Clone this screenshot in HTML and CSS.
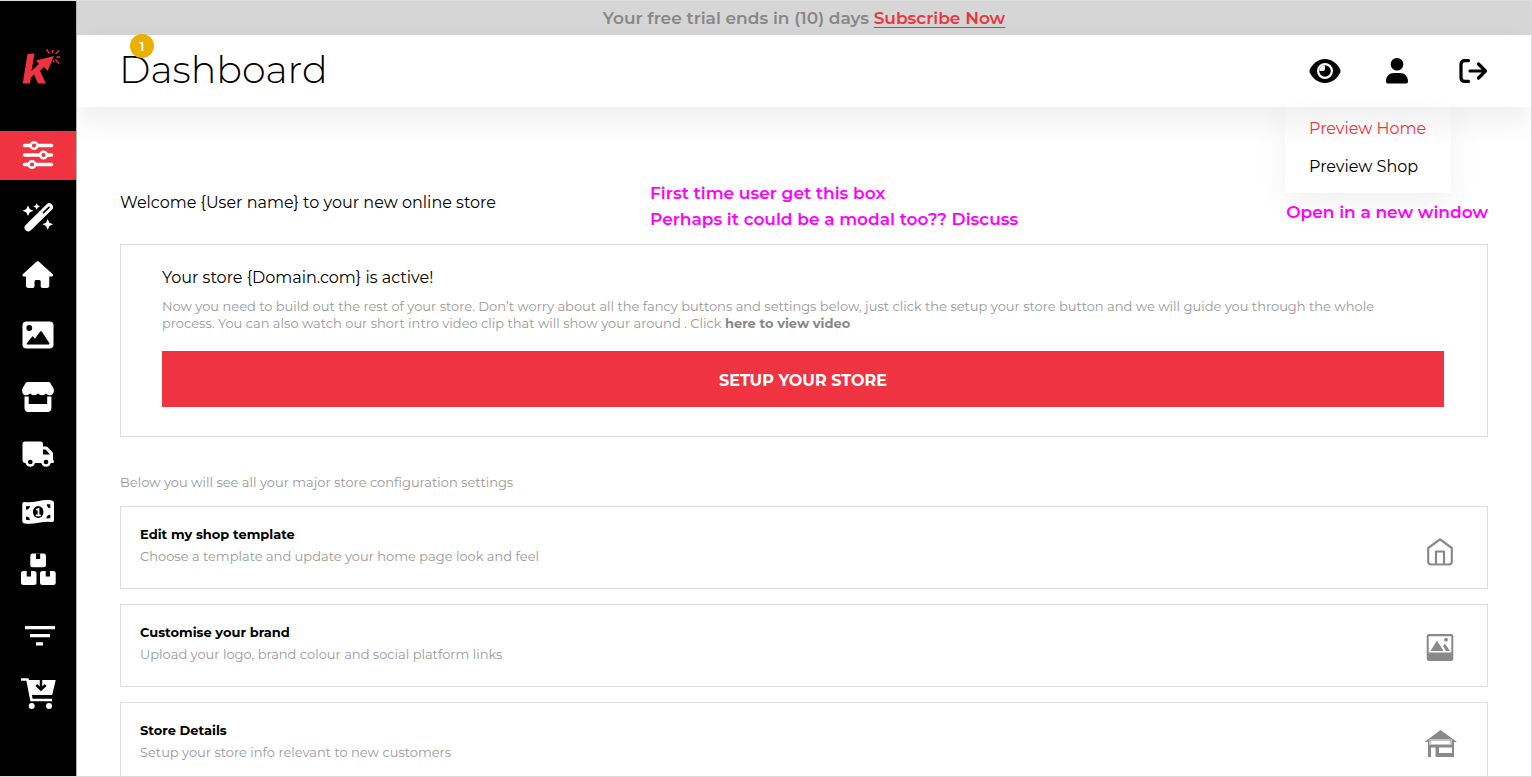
FILE: index.html
```html
<!DOCTYPE html>
<html lang="en">
<head>
<meta charset="utf-8">
<meta name="viewport" content="width=device-width, initial-scale=1">
<title>Dashboard</title>
<link rel="stylesheet" href="styles.css">
</head>
<body>
<div class="shell">
  <aside class="sidebar">
    <a class="logo" href="#" aria-label="Store home">
      <svg width="42" height="42" viewBox="0 0 42 42" fill="#ef3340">
        <path d="M7.500 9l7-.5-3 17.500 7.500-7-3-3.500 18-4.500-6.500 15-3.500-4-4 4 6 12.500h-8l-4-9-3 3-1.200 6H2.700z"/>
        <path d="M26.500 4.500l3 4M33 5l-.5 3M39.500 5.500l-4 3.500M36.500 12h3.500M35.500 14.500l3.500 4M33.500 15l.5 2.500" stroke="#ef3340" stroke-width="1.300"/>
      </svg>
    </a>
    <nav class="nav" aria-label="Main">
      <a class="nav-item nav-item-active" href="#" aria-label="Settings">
        <svg class="nav-icon" viewBox="0 0 36 36"><path d="M4.500 8.500h27M4.500 18h27M4.500 27.500h27" stroke="#fff" stroke-width="3.600" stroke-linecap="round"/><g fill="#ef3340" stroke="#fff" stroke-width="2.500"><circle cx="14" cy="8.500" r="3.300"/><circle cx="23.500" cy="18" r="3.300"/><circle cx="12" cy="27.500" r="3.300"/></g></svg>
      </a>
      <a class="nav-item" href="#" aria-label="Design">
        <svg class="nav-icon" viewBox="0 0 36 36"><path d="M8.300 28.700L29.300 8" stroke="#fff" stroke-width="7.400" stroke-linecap="round"/><path d="M23.500 13.700L29 8.300" stroke="#000" stroke-width="1.700" stroke-linecap="round"/><path fill="#fff" d="M8 6.500l1.700 3.600 3.600 1.600-3.600 1.700L8 17l-1.700-3.600-3.600-1.700 3.600-1.600zM16.700 4l1.100 2.300L20 7.400l-2.200 1-1.100 2.300-1.100-2.300-2.200-1 2.200-1.100zM27.700 20l1.700 3.700 3.600 1.600-3.600 1.700-1.700 3.700-1.700-3.700-3.600-1.700 3.600-1.600z"/></svg>
      </a>
      <a class="nav-item" href="#" aria-label="Home">
        <svg class="nav-icon" viewBox="0 0 36 36"><path fill="#fff" d="M16.700 3.500q1-.8 2 0L32.500 16q1.500 2.200-.7 2.600H29.300V27q0 3-2.500 3H22.500q-1.800 0-1.800-1.800V23.500q0-1.500-1.500-1.500h-3.200q-1.500 0-1.500 1.500V28.200q0 1.800-1.800 1.800H8.600Q6 30 6 27.500V18.600H3.700Q1.500 18 3 16z"/></svg>
      </a>
      <a class="nav-item" href="#" aria-label="Media">
        <svg class="nav-icon" viewBox="0 0 36 36"><rect x="2.500" y="4.500" width="31" height="27" rx="4" fill="#fff"/><circle cx="9.300" cy="11" r="2.900"/><path d="M7 27.500q-.7-.5 0-1.500l5-6.300q.7-.8 1.400 0l1.500 2 5.300-7.200q.8-1 1.600 0l7.500 11.500q.6 1-.5 1.500z"/></svg>
      </a>
      <a class="nav-item" href="#" aria-label="Shop">
        <svg class="nav-icon" viewBox="0 0 36 36"><path fill="#fff" d="M7.500 6h21q1.300 0 2 1.200l2.800 4.800c1.700 3.500-.3 7.300-3.500 7.300q-2.400 0-3.900-1.800-1.600 1.800-4 1.800T18 17.500q-1.600 1.800-4 1.800t-3.900-1.800q-1.500 1.800-3.900 1.800C2.800 19.300 1 15.500 2.700 12l2.800-4.800Q6.200 6 7.500 6zM4.500 20.500h4.200v7.500h18.500V20.500h4.200v11.500q0 4-4 4H8.500q-4 0-4-4z"/></svg>
      </a>
      <a class="nav-item" href="#" aria-label="Shipping">
        <svg class="nav-icon" viewBox="0 0 36 36"><path fill="#fff" d="M5 6.500h15.500q2.500 0 2.500 2.500v2.500h3q1 0 1.800.7l4.500 4.800q.7.800.7 1.800V25q1 .2 1 1.500T33 28H5.500q-3 0-3-3V9q0-2.500 2.500-2.500z"/><path d="M23 14.500h2.600l4.400 5h-7z"/><g stroke="#fff" stroke-width="2.500"><circle cx="10.300" cy="27" r="3.600"/><circle cx="26" cy="27" r="3.600"/></g></svg>
      </a>
      <a class="nav-item" href="#" aria-label="Payments">
        <svg class="nav-icon" viewBox="0 0 36 36"><path fill="#fff" d="M2.300 10q0-2.200 2.200-2c9 1.500 18-3.500 27.500-1.600q2 .4 2 2.400V26q0 2.300-2.300 2-5.500-.8-13 .8T4.500 29.500q-2.200-.5-2.200-2.500z"/><ellipse cx="18.200" cy="18" rx="5.300" ry="6"/><path d="M6 12.300l4-.2q-.5 3.500-4 3.700zM30.300 10.200v4q-3.300-.3-3.500-4zM6 22.500q3.700.3 4 3.800l-4-.5zM30.300 20.500v3.800l-4 .2q.3-3.500 4-4z"/><path d="M16.200 15.700l2.300-.8v6.300M15.800 21.300h5" fill="none" stroke="#fff" stroke-width="1.700"/></svg>
      </a>
      <a class="nav-item" href="#" aria-label="Inventory">
        <svg class="nav-icon" viewBox="0 0 36 36"><g fill="#fff"><rect x="10.300" y=".5" width="15.700" height="13.800" rx="2.500"/><rect x="1" y="18" width="15.500" height="14" rx="2.500"/><rect x="20" y="18" width="15.700" height="14" rx="2.500"/></g><path d="M16 .5h4.200V6H16zM6.700 18H11v5.500H6.700zM25.700 18H30v5.500h-4.300z"/></svg>
      </a>
      <a class="nav-item nav-item-spaced" href="#" aria-label="Filters">
        <svg class="nav-icon" viewBox="0 0 36 36"><path fill="#fff" d="M5 9h30v3.300H5zM10 17h20v3.300H10zM16 25.300h7v3.300h-7z"/></svg>
      </a>
      <a class="nav-item" href="#" aria-label="Orders">
        <svg class="nav-icon" viewBox="0 0 36 36"><path d="M1 3.500h6.500L11.500 24h20.500" fill="none" stroke="#fff" stroke-width="2.700"/><path fill="#fff" d="M8 4h27.700l-3.500 15H11z"/><g fill="#fff"><circle cx="11.700" cy="30" r="3"/><circle cx="29" cy="30" r="3"/></g><path d="M21 2v11M16.300 9l4.700 4.500L25.700 9" fill="none" stroke="#000" stroke-width="2.500"/></svg>
      </a>
    </nav>
  </aside>

  <div class="page">
    <p class="trial">Your free trial ends in (10) days <a href="#">Subscribe Now</a></p>
    <header class="header">
      <h1 class="title">Dashboard<span class="badge">1</span></h1>
      <div class="actions">
        <div class="preview">
          <button class="icon-button" type="button" aria-label="Preview" aria-expanded="true">
            <svg width="32" height="32" viewBox="0 0 32 32"><path d="M16 4C8.500 4 3 9.500.7 14.800q-.4 1.200 0 2.400C3 22.500 8.500 28 16 28s13-5.500 15.300-10.800q.4-1.200 0-2.400C29 9.500 23.500 4 16 4z"/><circle cx="16" cy="16" r="6.900" stroke="#fff" stroke-width="2.200"/><path fill="#fff" d="M16 10.500v3q0 2.500-2.500 2.500h-3q0-5.500 5.500-5.500z"/></svg>
          </button>
          <div class="menu">
            <a class="menu-link menu-link-active" href="#">Preview Home</a>
            <a class="menu-link" href="#">Preview Shop</a>
          </div>
        </div>
        <button class="icon-button" type="button" aria-label="Account">
          <svg width="32" height="32" viewBox="0 0 32 32"><circle cx="14" cy="9.200" r="6.300"/><path d="M3 26.500C3 21 6.500 18 11 18h6c4.500 0 8 3 8 8.500q0 2-1.700 2H4.700q-1.700 0-1.700-2z"/></svg>
        </button>
        <button class="icon-button" type="button" aria-label="Log out">
          <svg width="32" height="32" viewBox="0 0 32 32" fill="none" stroke="#000" stroke-width="3.200" stroke-linecap="round" stroke-linejoin="round"><path d="M11.500 5.600H8Q4 5.600 4 9.600v12.800q0 4 4 4h3.500M13 16h15M21.500 9l7 7-7 7"/></svg>
        </button>
      </div>
    </header>

    <main class="content">
      <div class="intro">
        <p class="welcome">Welcome {User name} to your new online store</p>
        <p class="note">First time user get this box<br>Perhaps it could be a modal too?? Discuss</p>
        <p class="note note-end">Open in a new window</p>
      </div>

      <section class="setup">
        <h2 class="setup-title">Your store {Domain.com} is active!</h2>
        <p class="setup-text">Now you need to build out the rest of your store. Don’t worry about all the fancy buttons and settings below, just click the setup your store button and we will guide you through the whole process. You can also watch our short intro video clip that will show your around . Click <a href="#">here to view video</a></p>
        <button class="setup-button" type="button">SETUP YOUR STORE</button>
      </section>

      <p class="lead">Below you will see all your major store configuration settings</p>

      <div class="cards">
        <a class="card" href="#">
          <span class="card-body"><strong class="card-title">Edit my shop template</strong><span class="card-text">Choose a template and update your home page look and feel</span></span>
          <svg class="card-icon" viewBox="0 0 32 32" fill="none" stroke="#898989" stroke-width="2.200" stroke-linejoin="round"><path d="M4.200 14L16 5.300l11.800 8.700V27.500q0 3-3 3H7.200q-3 0-3-3z"/><path d="M12 30.500V17.500h8v13"/></svg>
        </a>
        <a class="card" href="#">
          <span class="card-body"><strong class="card-title">Customise your brand</strong><span class="card-text">Upload your logo, brand colour and social platform links</span></span>
          <svg class="card-icon" viewBox="0 0 32 32" fill="#898989"><path fill-rule="evenodd" d="M5 2h22q2.300 0 2.300 2.300v22.400Q29.300 29 27 29H5q-2.300 0-2.300-2.300V4.300Q2.700 2 5 2zm.5 2.200q-.8 0-.8.800v15.500h22.600V5q0-.8-.8-.8z"/><path d="M6.500 19L13 8.500 19.500 19zM19 14l2-2.300 5 7.300h-4z"/><circle cx="22" cy="7.700" r="1.900"/></svg>
        </a>
        <a class="card" href="#">
          <span class="card-body"><strong class="card-title">Store Details</strong><span class="card-text">Setup your store info relevant to new customers</span></span>
          <svg class="card-icon" viewBox="0 0 32 32" fill="#898989"><path d="M16.500 0L33 12h-3v15H4V12H.5z"/><path fill="#fff" d="M6.500 10.500h20v4h-20zM7 17.500h4.500V27.500H7zM15 17.500h13v5.500H15z"/><path d="M5.500 9.500h22v5h-22z" fill="none" stroke="#c4c4c4"/></svg>
        </a>
      </div>
    </main>
  </div>
</div>
</body>
</html>
```
FILE: styles.css
```css
* { box-sizing: border-box; }

body {
  margin: 0;
  background: #fff;
  color: #000;
  font-family: Montserrat, Inter, "Open Sans", sans-serif;
  font-size: 16px;
}

h1, h2, p { margin: 0; }
a { color: inherit; text-decoration: none; }
svg { display: block; overflow: visible; }
button { border: 0; padding: 0; font: inherit; cursor: pointer; }

.shell {
  display: flex;
  height: 100vh;
  overflow: hidden;
  border: 1px solid #dcdcdc;
  border-left: 0;
}

.sidebar {
  flex: none;
  width: 77px;
  background: #000;
  border-right: 1px solid #b5b5b0;
}

.logo { display: block; height: 130px; padding: 44px 0 0 20px; }

.nav { display: flex; flex-direction: column; gap: 10px; }
.nav-item { display: flex; align-items: center; justify-content: center; height: 49px; padding-bottom: 2px; }
.nav-item-active { background: #ef3340; margin-bottom: 3px; }
.nav-item-spaced { margin-top: 5px; }
.nav-icon { width: 36px; height: 36px; }

.page { flex: 1; min-width: 0; }

.trial {
  background: #d6d6d6;
  color: #888;
  font-size: 17px;
  font-weight: 600;
  line-height: 34px;
  text-align: center;
}
.trial a {
  color: #ef3340;
  text-decoration: underline;
  text-decoration-thickness: 1px;
  text-underline-offset: 3px;
  text-decoration-skip-ink: none;
}

.header {
  position: relative;
  z-index: 1;
  display: flex;
  align-items: center;
  justify-content: space-between;
  height: 72px;
  padding: 0 42px;
  background: #fff;
  box-shadow: 0 12px 32px rgba(0, 0, 0, 0.08);
}

.title { position: relative; padding-bottom: 2px; font-size: 38px; font-weight: 300; line-height: 48px; }

.badge {
  position: absolute;
  top: -12px;
  left: 11px;
  width: 24px;
  height: 24px;
  border-radius: 50%;
  background: #e9b000;
  color: #fff;
  font-size: 13px;
  font-weight: 600;
  line-height: 24px;
  text-align: center;
}

.actions { display: flex; gap: 42px; }
.icon-button { display: block; width: 32px; height: 32px; background: none; }
.preview { position: relative; }

.menu {
  position: absolute;
  top: 52px;
  left: -24px;
  width: 166px;
  padding: 3px 0 7px 24px;
  background: linear-gradient(#f1f1f1, #fff 45%);
  box-shadow: 0 12px 32px rgba(0, 0, 0, 0.06);
}
.menu-link { display: block; line-height: 38px; white-space: nowrap; }
.menu-link-active { color: #ef3340; }

.content { padding: 73px 43px 0; }

.intro { display: grid; grid-template-columns: 530px 1fr auto; height: 64px; }
.welcome { line-height: 46px; }
.note { color: #f0f; font-size: 17px; font-weight: 600; line-height: 26px; }
.note-end { line-height: 64px; position: relative; z-index: 2; }

.setup { padding: 22px 43px 29px 41px; border: 1px solid #dcdcdc; }
.setup-title { font-size: 16px; font-weight: 400; line-height: 22px; }
.setup-text { margin: 9px 0 19px; padding-right: 40px; color: #999; font-size: 13px; line-height: 17px; }
.setup-text a { color: #888; font-weight: 700; }
.setup-button { display: block; width: 100%; height: 56px; padding-top: 2px; background: #ef3340; color: #fff; font-weight: 700; }

.lead { margin: 35px 0 14px; color: #999; font-size: 13px; line-height: 20px; }

.cards { display: grid; gap: 15px; }
.card {
  display: flex;
  align-items: center;
  justify-content: space-between;
  height: 83px;
  padding: 0 31px 0 19px;
  border: 1px solid #dcdcdc;
}
.card-body { display: grid; padding-bottom: 5px; line-height: 22px; font-size: 13px; }
.card-text { color: #999; }
.card-icon { width: 32px; height: 32px; margin-top: 4px; }
```
